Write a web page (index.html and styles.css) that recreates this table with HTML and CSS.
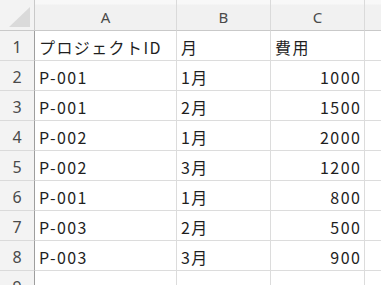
FILE: index.html
```html
<!DOCTYPE html>
<html lang="ja">
<head>
<meta charset="utf-8">
<link rel="stylesheet" href="styles.css">
</head>
<body>
<div class="sheet">
  <div class="corner"><svg class="tri" width="22" height="21" viewBox="0 0 22 21"><polygon points="21,0 21,20 0,20" fill="#dadada"/></svg></div>
  <div class="colhead">A</div>
  <div class="colhead">B</div>
  <div class="colhead">C</div>
  <div class="colhead last"></div>

  <div class="rowhead">1</div><div class="cell">プロジェクトID</div><div class="cell">月</div><div class="cell">費用</div><div class="cell last"></div>
  <div class="rowhead">2</div><div class="cell">P-001</div><div class="cell">1月</div><div class="cell num">1000</div><div class="cell last"></div>
  <div class="rowhead">3</div><div class="cell">P-001</div><div class="cell">2月</div><div class="cell num">1500</div><div class="cell last"></div>
  <div class="rowhead">4</div><div class="cell">P-002</div><div class="cell">1月</div><div class="cell num">2000</div><div class="cell last"></div>
  <div class="rowhead">5</div><div class="cell">P-002</div><div class="cell">3月</div><div class="cell num">1200</div><div class="cell last"></div>
  <div class="rowhead">6</div><div class="cell">P-001</div><div class="cell">1月</div><div class="cell num">800</div><div class="cell last"></div>
  <div class="rowhead">7</div><div class="cell">P-003</div><div class="cell">2月</div><div class="cell num">500</div><div class="cell last"></div>
  <div class="rowhead">8</div><div class="cell">P-003</div><div class="cell">3月</div><div class="cell num">900</div><div class="cell last"></div>
  <div class="rowhead">9</div><div class="cell"></div><div class="cell"></div><div class="cell"></div><div class="cell last"></div>
</div>
</body>
</html>
```

FILE: styles.css
```css
html, body {
  margin: 0;
  padding: 0;
  background: #ffffff;
  overflow: hidden;
}
.sheet {
  display: grid;
  grid-template-columns: 35px 142px 94px 94px 1fr;
  grid-template-rows: 31px repeat(9, 30px);
  width: 381px;
  font-family: "Noto Sans CJK JP", "Noto Sans", sans-serif;
}
.corner {
  background: #f3f3f3;
  border-right: 1px solid #c9c9c9;
  border-bottom: 1px solid #c9c9c9;
  box-sizing: border-box;
  display: flex;
  align-items: flex-end;
  justify-content: flex-end;
  padding: 0 3px 2px 0;
}
.tri { display: block; }
.colhead {
  background: linear-gradient(#f8f8f8 0, #f8f8f8 4px, #f1f1f1 5px);
  border-right: 1px solid #dadada;
  border-bottom: 1px solid #c9c9c9;
  box-sizing: border-box;
  display: flex;
  align-items: center;
  justify-content: center;
  font-family: "Noto Sans", "Noto Sans CJK JP", sans-serif;
  font-size: 15px;
  color: #4a4a4a;
  padding-top: 3px;
}
.rowhead {
  background: #f3f3f3;
  border-right: 1px solid #9e9e9e;
  border-bottom: 1px solid #dadada;
  box-sizing: border-box;
  display: flex;
  align-items: center;
  justify-content: center;
  font-family: "Noto Sans", "Noto Sans CJK JP", sans-serif;
  font-size: 16px;
  color: #4a4a4a;
  padding-top: 3px;
}
.cell {
  border-right: 1px solid #dcdcdc;
  border-bottom: 1px solid #dcdcdc;
  box-sizing: border-box;
  display: flex;
  align-items: center;
  padding: 3px 4px 0 4px;
  font-size: 16px;
  letter-spacing: 1.4px;
  color: #1f1f1f;
  white-space: nowrap;
}
.num {
  justify-content: flex-end;
  letter-spacing: 1.5px;
  padding-right: 2.5px;
}
.last { border-right: none; }
```
